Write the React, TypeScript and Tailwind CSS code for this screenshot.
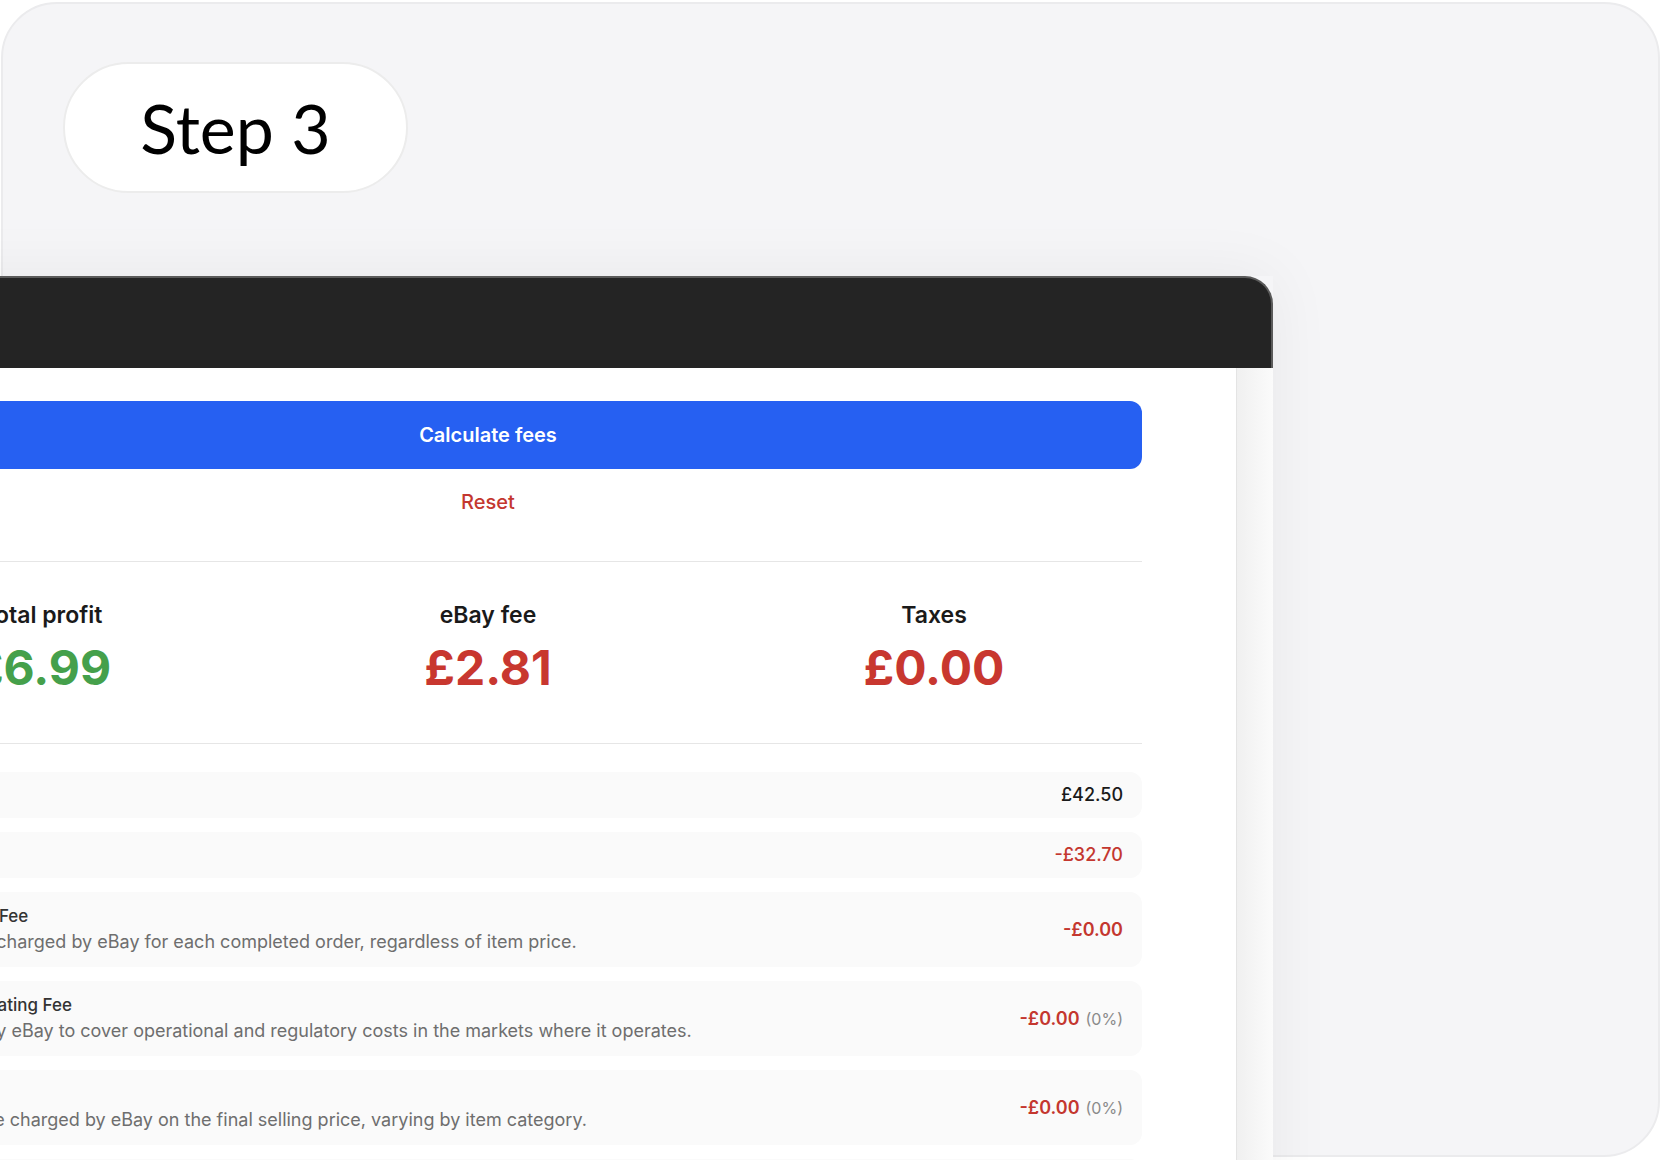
import React from "react";

type Row = {
  label?: string;
  title?: string;
  desc?: string;
  value: string;
  pct?: string;
  tone: "plain" | "neg" | "fee";
};

const rows: Row[] = [
  { label: "Sold price", value: "£42.50", tone: "plain" },
  { label: "Item cost", value: "-£32.70", tone: "neg" },
  {
    title: "Fixed Per-Order Fee",
    desc: "A low fixed fee charged by eBay for each completed order, regardless of item price.",
    value: "-£0.00",
    tone: "fee",
  },
  {
    title: "Regulatory Operating Fee",
    desc: "Fees charged by eBay to cover operational and regulatory costs in the markets where it operates.",
    value: "-£0.00",
    pct: "(0%)",
    tone: "fee",
  },
  {
    title: "Final Value Fee",
    desc: "A final-value fee charged by eBay on the final selling price, varying by item category.",
    value: "-£0.00",
    pct: "(0%)",
    tone: "fee",
  },
  {
    title: "International Fee",
    desc: "An extra fee charged by eBay when an item is sold to a buyer outside the UK.",
    value: "-£0.00",
    pct: "(0%)",
    tone: "fee",
  },
];

function BreakdownRow({ row }: { row: Row }) {
  if (row.label) {
    return (
      <div className="flex items-center justify-between rounded-[12px] bg-[#fafafa] pl-[31px] pr-[19px] py-[12px]">
        <span className="text-[17px] leading-[22px] font-medium text-[#333]">{row.label}</span>
        <span
          className={
            row.tone === "neg"
              ? "text-[18px] leading-[22px] font-medium text-[#c4372f]"
              : "text-[18px] leading-[22px] font-medium text-[#1a1a1a]"
          }
        >
          {row.value}
        </span>
      </div>
    );
  }

  return (
    <div className="flex items-center justify-between rounded-[12px] bg-[#fafafa] pl-[31px] pr-[19px] py-[12px]">
      <div className="flex flex-col">
        <span className="text-[17px] leading-[25px] font-medium text-[#333] whitespace-nowrap">{row.title}</span>
        <span className="text-[18px] leading-[26px] text-[#6e6e6e] whitespace-nowrap">{row.desc}</span>
      </div>
      <div className="flex items-baseline gap-[6px] whitespace-nowrap">
        <span className="text-[18px] font-semibold text-[#c4372f]">{row.value}</span>
        {row.pct && <span className="text-[16px] text-[#8a8a8a]">{row.pct}</span>}
      </div>
    </div>
  );
}

function Stat({ label, value, color }: { label: string; value: string; color: string }) {
  return (
    <div className="flex flex-col items-center">
      <span className="text-[23px] leading-[30px] font-semibold text-[#1a1a1a] whitespace-nowrap">{label}</span>
      <span className={`mt-[9px] text-[48px] leading-[58px] font-bold whitespace-nowrap ${color}`}>{value}</span>
    </div>
  );
}

export default function App() {
  return (
    <div
      className="w-[1664px] h-[1160px] overflow-hidden bg-white"
      style={{ fontFamily: "Inter, 'Noto Sans', sans-serif" }}
    >
      <div className="ml-[1px] mt-[2px] w-[1659px] h-[1155px] rounded-[56px] border-2 border-[#ebebed] bg-[#f5f5f7]">
        {/* step pill */}
        <div className="ml-[60px] mt-[58px] flex h-[131px] w-[345px] items-center justify-center rounded-full border-2 border-[#ececec] bg-white">
          <span
            className="text-[68px] leading-none text-black"
            style={{ fontFamily: "Lato, 'Open Sans', sans-serif" }}
          >
            Step 3
          </span>
        </div>

        {/* app window */}
        <div className="ml-[-263px] mt-[83px] w-[1533px] shadow-[0_0_60px_rgba(0,0,0,0.06)]">
          <div className="h-[92px] rounded-tr-[28px] border-t-2 border-r-2 border-[#5a5a5a] bg-[#242424]" />

          <div className="flex">
            <div className="flex-1 bg-white pb-10">
              <div className="mx-auto w-[1308px] pt-[33px]">
                <button className="flex h-[68px] w-full items-center justify-center rounded-[12px] bg-[#2660f2] text-[20px] font-semibold text-white">
                  Calculate fees
                </button>
                <div className="mt-[19px] text-center text-[20px] leading-[28px] font-medium text-[#c4372f]">
                  Reset
                </div>

                <div className="mt-[45px] border-t border-[#e6e6e6]" />

                <div className="grid grid-cols-3 gap-[30px] pt-[38px] pb-[46px]">
                  <Stat label="Total profit" value="£6.99" color="text-[#45a04b]" />
                  <Stat label="eBay fee" value="£2.81" color="text-[#c8372f]" />
                  <Stat label="Taxes" value="£0.00" color="text-[#c8372f]" />
                </div>

                <div className="border-t border-[#e6e6e6]" />

                <div className="mt-[28px] flex flex-col gap-[14px]">
                  {rows.map((row, i) => (
                    <BreakdownRow key={i} row={row} />
                  ))}
                </div>
              </div>
            </div>
            <div className="w-[37px] border-l border-[#e4e4e4] bg-gradient-to-r from-[#f0f0f0] to-[#fbfbfb]" />
          </div>
        </div>
      </div>
    </div>
  );
}
